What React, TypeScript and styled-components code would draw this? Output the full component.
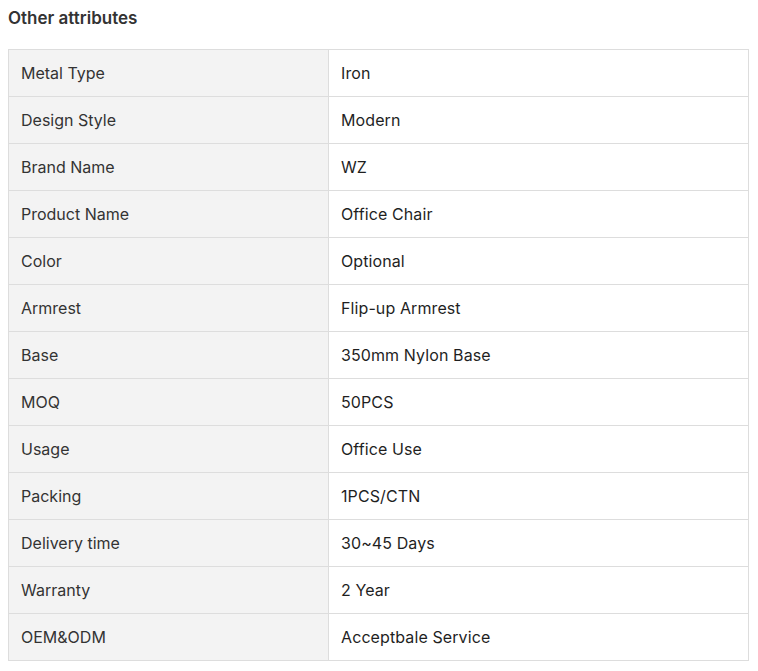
import React from "react";
import styled, { createGlobalStyle } from "styled-components";

const Global = createGlobalStyle`
  body { margin: 8px; font-family: Inter, "Noto Sans", sans-serif; background: #fff; color: #333; }
`;

const Title = styled.h3`
  margin: 0 0 21px;
  font-size: 17px;
  line-height: 20px;
  font-weight: 600;
  color: #333;
`;

const Table = styled.table`
  width: 741px;
  border-collapse: collapse;
  table-layout: fixed;
`;

const Cell = styled.td<{ $label?: boolean }>`
  height: 47px;
  box-sizing: border-box;
  padding: 0 12px;
  border: 1px solid #dddddd;
  font-size: 16px;
  line-height: 20px;
  background: ${(p) => (p.$label ? "#f3f3f3" : "#fff")};
  color: ${(p) => (p.$label ? "#333" : "#1f1f1f")};
  font-weight: 400;
  letter-spacing: ${(p) => (p.$label ? "0" : "0.1px")};
  width: ${(p) => (p.$label ? "320px" : "auto")};
`;

const rows: [string, string][] = [
  ["Metal Type", "Iron"],
  ["Design Style", "Modern"],
  ["Brand Name", "WZ"],
  ["Product Name", "Office Chair"],
  ["Color", "Optional"],
  ["Armrest", "Flip-up Armrest"],
  ["Base", "350mm Nylon Base"],
  ["MOQ", "50PCS"],
  ["Usage", "Office Use"],
  ["Packing", "1PCS/CTN"],
  ["Delivery time", "30~45 Days"],
  ["Warranty", "2 Year"],
  ["OEM&ODM", "Acceptbale Service"],
];

export default function App() {
  return (
    <>
      <Global />
      <Title>Other attributes</Title>
      <Table>
        <tbody>
          {rows.map(([k, v]) => (
            <tr key={k}>
              <Cell $label>{k}</Cell>
              <Cell>{v}</Cell>
            </tr>
          ))}
        </tbody>
      </Table>
    </>
  );
}
